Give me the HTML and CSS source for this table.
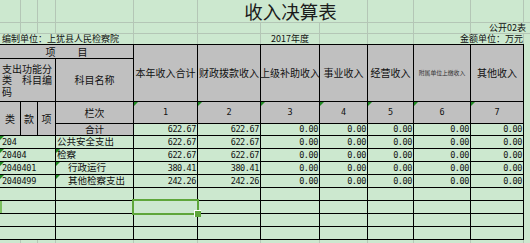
FILE: index.html
```html
<!DOCTYPE html>
<html lang="zh-CN">
<head>
<meta charset="utf-8">
<title>收入决算表</title>
<link rel="stylesheet" href="styles.css">
</head>
<body>
<div class="sheet">
  <div class="top">
    <div></div><div></div><div></div><div></div><div></div>
    <div class="title">收入决算表</div>
    <div></div><div></div><div></div><div></div>

    <div></div><div></div><div></div><div></div><div></div><div></div><div></div><div></div><div></div><div></div><div></div>
    <div class="ovr s"><span class="cover">公开02表</span></div>

    <div class="span4 s left">编制单位：上犹县人民检察院</div>
    <div></div><div></div>
    <div class="s center">2017年度</div>
    <div></div><div></div>
    <div class="span2 s right">金额单位：万元</div>
    <div></div>
  </div>

  <div class="main">
    <div class="tbl">
      <div class="g h span4">项<span class="gapx"></span>目</div>
      <div class="g h rs2">本年收入合计</div>
      <div class="g h rs2">财政拨款收入</div>
      <div class="g h rs2">上级补助收入</div>
      <div class="g h rs2">事业收入</div>
      <div class="g h rs2">经营收入</div>
      <div class="g h rs2 tiny">附属单位上缴收入</div>
      <div class="g h rs2">其他收入</div>

      <div class="g fn span3">
        <div class="fn-text">
          <span class="ln">支出功能分</span>
          <span class="ln">类<span class="gapy"></span>科目编</span>
          <span class="ln">码</span>
        </div>
      </div>
      <div class="g h">科目名称</div>

      <div class="g h rs2">类</div>
      <div class="g h rs2">款</div>
      <div class="g h rs2">项</div>
      <div class="g h">栏次</div>
      <div class="g h num tri">1</div>
      <div class="g h num tri">2</div>
      <div class="g h num tri">3</div>
      <div class="g h num tri">4</div>
      <div class="g h num tri">5</div>
      <div class="g h num tri">6</div>
      <div class="g h num tri">7</div>

      <div class="g h sum">合计</div>
      <div class="n">622.67</div><div class="n">622.67</div><div class="n">0.00</div><div class="n">0.00</div><div class="n">0.00</div><div class="n">0.00</div><div class="n">0.00</div>

      <div class="code span3 tri">204</div>
      <div class="nm">公共安全支出</div>
      <div class="n">622.67</div><div class="n">622.67</div><div class="n">0.00</div><div class="n">0.00</div><div class="n">0.00</div><div class="n">0.00</div><div class="n">0.00</div>

      <div class="code span3 tri">20404</div>
      <div class="nm tri">检察</div>
      <div class="n">622.67</div><div class="n">622.67</div><div class="n">0.00</div><div class="n">0.00</div><div class="n">0.00</div><div class="n">0.00</div><div class="n">0.00</div>

      <div class="code span3 tri">2040401</div>
      <div class="nm ind tri">行政运行</div>
      <div class="n">380.41</div><div class="n">380.41</div><div class="n">0.00</div><div class="n">0.00</div><div class="n">0.00</div><div class="n">0.00</div><div class="n">0.00</div>

      <div class="code span3 tri">2040499</div>
      <div class="nm ind tri">其他检察支出</div>
      <div class="n">242.26</div><div class="n">242.26</div><div class="n">0.00</div><div class="n">0.00</div><div class="n">0.00</div><div class="n">0.00</div><div class="n">0.00</div>

      <div class="span3"></div><div></div><div></div><div></div><div></div><div></div><div></div><div></div><div></div>
      <div class="span3 mark"></div><div></div><div class="sel"></div><div></div><div></div><div></div><div></div><div></div><div></div>
      <div class="span3"></div><div></div><div></div><div></div><div></div><div></div><div></div><div></div><div></div>
      <div class="span3"></div><div></div><div></div><div></div><div></div><div></div><div></div><div></div><div></div>
    </div>
    <div class="side"></div>
  </div>

  <div class="foot">
    <div></div><div></div><div></div><div></div><div></div><div></div><div></div><div></div><div></div><div></div><div></div><div></div>
  </div>
</div>
</body>
</html>
```

FILE: styles.css
```css
* { box-sizing: border-box; margin: 0; padding: 0; }
html, body { width: 530px; height: 243px; overflow: hidden; background: #cce8cf; }
body { font-family: "Noto Sans CJK SC", "Noto Sans", sans-serif; color: #111; }

.sheet { display: flex; flex-direction: column; width: 530px; }

.top, .foot {
  display: grid;
  grid-template-columns: 20px 16px 17px 77px 63px 62px 58px 47px 45px 56px 52px 6px;
  gap: 1px;
  background: #b4c6b6;
}
.top { grid-template-rows: 22px 10px 10px; }
.foot { grid-template-rows: 12px; }

:where(.top, .foot, .tbl) > div {
  background: #cce8cf;
  display: flex;
  align-items: center;
  white-space: nowrap;
  position: relative;
  min-width: 0;
  line-height: 1;
}

.main { display: flex; }
.tbl {
  display: grid;
  width: 524px;
  grid-template-columns: 20px 16px 17px 77px 63px 62px 58px 47px 45px 56px 52px;
  grid-template-rows: 13px 42px 21px 11px repeat(8, 12px);
  gap: 1px;
  background: #000;
  padding: 1px 1px 1px 0;
}
.side { flex: 1; background: #cce8cf; }

.span2 { grid-column: span 2; }
.span3 { grid-column: span 3; }
.span4 { grid-column: span 4; }
.rs2 { grid-row: span 2; }

.title {
  grid-column: span 3;
  font-size: 18.5px;
  line-height: 22px;
  justify-content: center;
  padding-left: 16px;
  color: #1c1c1c;
}
.s { font-size: 9px; line-height: 10px; }
.left { padding-left: 2px; }
.center { justify-content: center; }
.right { justify-content: flex-end; }
.ovr { justify-content: flex-end; padding-right: 4px; }
.cover { background: #cce8cf; position: relative; z-index: 1; }

.g { background: #c0c0c0; }
.h { font-size: 10px; justify-content: center; }
.gapx { display: inline-block; width: 22px; }
.tiny { font-size: 5.8px; color: #333; }
.fn { padding-left: 2px; }
.fn-text { display: flex; flex-direction: column; font-size: 10px; }
.ln { display: block; height: 11.5px; line-height: 11.5px; white-space: nowrap; }
.gapy { display: inline-block; width: 10px; }
.num { font-family: "DejaVu Sans Mono", monospace; font-size: 8.5px; }
.sum { font-size: 9.5px; line-height: 11px; }

.n {
  font-family: "DejaVu Sans Mono", monospace;
  font-size: 8.5px;
  letter-spacing: -0.4px;
  justify-content: flex-end;
  padding-right: 1px;
}
.code {
  font-family: "DejaVu Sans Mono", monospace;
  font-size: 8.5px;
  letter-spacing: -0.25px;
  padding-left: 2px;
}
.nm { font-size: 9.5px; padding-left: 1px; }
.ind { padding-left: 12px; }

.tri::before {
  content: "";
  position: absolute;
  left: 0;
  top: 0;
  border-top: 4px solid #1f8a22;
  border-right: 4px solid transparent;
}

.sel {
  z-index: 2;
  outline: 2px solid #5ea63a;
  outline-offset: 0;
}
.sel::after {
  content: "";
  position: absolute;
  right: -4px;
  bottom: -4px;
  width: 6px;
  height: 6px;
  background: #5ea63a;
  border-left: 1px solid #fff;
  border-top: 1px solid #fff;
}
.mark { box-shadow: inset 2px 0 0 #7cc060; }
```
